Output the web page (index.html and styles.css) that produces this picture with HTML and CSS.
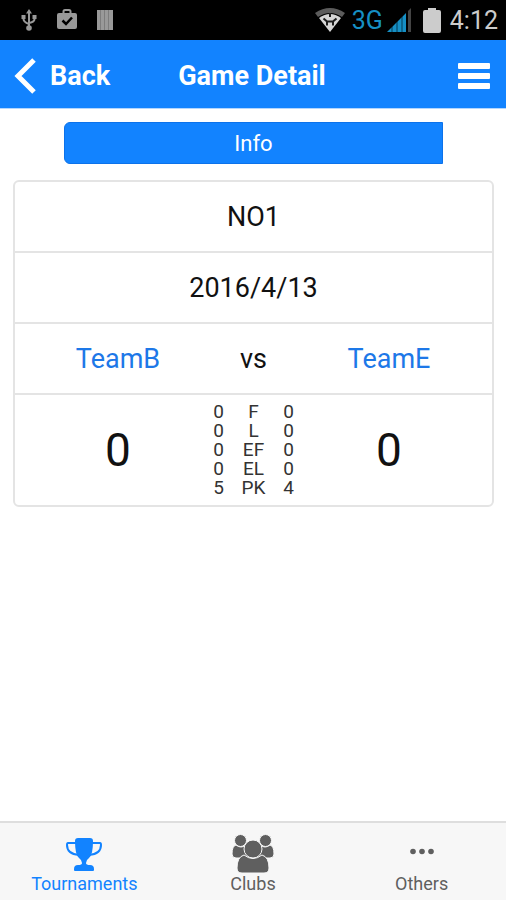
FILE: index.html
```html
<!DOCTYPE html>
<html lang="en">
<head>
<meta charset="utf-8">
<meta name="viewport" content="width=device-width, initial-scale=1">
<title>Game Detail</title>
<link rel="stylesheet" href="styles.css">
</head>
<body>
<div class="status">
  <div class="status-group status-left">
    <svg width="16" height="22" viewBox="0 0 16 22" fill="none" stroke="#999" stroke-width="2"><path d="M8 3v16M2.500 8v2q0 3 5.500 5M13.500 8v2q0 3-5.500 4"/><path d="M8 0l3 4.500H5zM.5 6h4v4h-4zM11.500 6h4v4h-4z" fill="#999" stroke="none"/><circle cx="8" cy="19" r="2.800" fill="#999" stroke="none"/></svg>
    <svg width="22" height="22" viewBox="0 0 22 22"><path d="M7.500 4V2.500Q7.500 1 9 1h4q1.500 0 1.500 1.500V4" fill="none" stroke="#999" stroke-width="2"/><rect x="1" y="4" width="20" height="16" rx="2" fill="#999"/><path d="M6.500 11.500l3.500 3.500 6-6.500" fill="none" stroke="#000" stroke-width="2.500"/></svg>
    <svg width="16" height="22" viewBox="0 0 16 22"><path d="M0 1h16v20H0z" fill="#999"/><path d="M3.500 1v20M7.500 1v20M11.500 1v20" stroke="#7c7c7c"/></svg>
  </div>
  <div class="status-group status-right">
    <svg width="30" height="24" viewBox="0 0 30 24"><path d="M0 5Q15-5 30 5l-3 4Q15 1 3 9z" fill="#5c5c5c"/><path d="M4 10Q15 2 26 10L15 24z" fill="#d6d6d6"/><path d="M8.500 10.500l3.500 3v4M21.500 10.500l-3.500 3v4M12 13.500h6M15 5v4" fill="none" stroke="#1c1c1c" stroke-width="2"/></svg>
    <span class="network">3G</span>
    <svg class="signal" width="25" height="24" viewBox="0 0 25 24"><path d="M21 3l3-3v24h-3z" fill="#444"/><path d="M0 24l4-4v4zM6 18l3-3v9H6zM11 13l3-3v14h-3zM16 8l3-3v19h-3z" fill="#168fc4"/><path d="M4 20l2-2v6H4zM9 15l2-2v11H9zM14 10l2-2v16h-2z" fill="#0c648c"/></svg>
    <svg class="battery" width="18" height="25" viewBox="0 0 18 25"><path d="M5 0h8v2h3q2 0 2 2v19q0 2-2 2H2q-2 0-2-2V4q0-2 2-2h3z" fill="#ccc"/></svg>
    <time class="clock">4:12</time>
  </div>
</div>
<header class="navbar">
  <button class="back" type="button">
    <svg width="22" height="36" viewBox="0 0 22 36" fill="none" stroke="#fff" stroke-width="5"><path d="M20 2L4 18l16 16"/></svg>
    <span>Back</span>
  </button>
  <h1 class="title">Game Detail</h1>
  <button class="menu" type="button" aria-label="Menu">
    <svg width="32" height="28" viewBox="0 0 32 28" fill="#fff"><rect y="1" width="32" height="6" rx="1"/><rect y="11" width="32" height="6" rx="1"/><rect y="21" width="32" height="6" rx="1"/></svg>
  </button>
</header>
<main class="content">
  <button class="segment" type="button">Info</button>
  <section class="card">
    <div class="row">NO1</div>
    <div class="row">2016/4/13</div>
    <div class="row match">
      <a class="team" href="#team-b">TeamB</a>
      <span>vs</span>
      <a class="team" href="#team-e">TeamE</a>
    </div>
    <div class="match scores">
      <strong class="score">0</strong>
      <table class="periods">
        <tbody>
          <tr><td>0</td><th scope="row">F</th><td>0</td></tr>
          <tr><td>0</td><th scope="row">L</th><td>0</td></tr>
          <tr><td>0</td><th scope="row">EF</th><td>0</td></tr>
          <tr><td>0</td><th scope="row">EL</th><td>0</td></tr>
          <tr><td>5</td><th scope="row">PK</th><td>4</td></tr>
        </tbody>
      </table>
      <strong class="score">0</strong>
    </div>
  </section>
</main>
<nav class="tabs">
  <a class="tab active" href="#tournaments">
    <svg width="36" height="40" viewBox="0 0 36 40"><path d="M10 9H2q-1 0-1 2 0 9 12 10M26 9h8q1 0 1 2 0 9-12 10" fill="none" stroke="currentColor" stroke-width="2"/><path d="M9 7q0-3 3-3h12q3 0 3 3 0 14-4 17-3 2-3 5 0 2 4 2 4 0 4 4v1q0 1-1 1H9q-1 0-1-1v-1q0-4 4-4t4-2q0-3-3-5Q9 21 9 7z" fill="currentColor"/></svg>
    <span>Tournaments</span>
  </a>
  <a class="tab" href="#clubs">
    <svg width="42" height="40" viewBox="0 0 42 40" fill="currentColor" stroke="#f7f7f7" stroke-width="1"><path d="M4 11q5 4 10 0l5 3v10H4q-4 0-4-4 0-8 4-9zM38 11q-5 4-10 0l-5 3v10h15q4 0 4-4 0-8-4-9z"/><circle cx="8.500" cy="6.500" r="6"/><circle cx="33.500" cy="6.500" r="6"/><path d="M12 21q9 7 18 0 7 2 7 13 0 5-5 5H10q-5 0-5-5 0-11 7-13z"/><circle cx="21" cy="15" r="9"/></svg>
    <span>Clubs</span>
  </a>
  <a class="tab" href="#others">
    <svg width="24" height="40" viewBox="0 0 24 40" fill="currentColor"><circle cx="3" cy="17.500" r="2.800"/><circle cx="12" cy="17.500" r="2.800"/><circle cx="21" cy="17.500" r="2.800"/></svg>
    <span>Others</span>
  </a>
</nav>
</body>
</html>
```
FILE: styles.css
```css
* {
  box-sizing: border-box;
}

body {
  margin: 0;
  min-height: 100vh;
  display: flex;
  flex-direction: column;
  background: #fff;
  color: #111;
  font-family: Roboto, "Liberation Sans", sans-serif;
}

button {
  font: inherit;
  color: inherit;
  border: 0;
  padding: 0;
  background: none;
}

a {
  color: inherit;
  text-decoration: none;
}

svg {
  display: block;
}

.status {
  display: flex;
  justify-content: space-between;
  align-items: center;
  height: 40px;
  padding: 0 8px 0 21px;
  background: #000;
}

.status-group {
  display: flex;
  align-items: center;
}

.status-left {
  gap: 19px;
}

.network {
  margin-left: 7px;
  color: #168fc4;
  font-size: 25px;
}

.signal {
  margin-left: 4px;
}

.battery {
  margin: 0 9px 0 11px;
}

.clock {
  padding-top: 2px;
  color: #ccc;
  font-size: 25px;
  line-height: 40px;
}

.navbar {
  display: grid;
  grid-template-columns: 1fr auto 1fr;
  align-items: center;
  height: 69px;
  padding: 3px 16px 0 14px;
  background: #1283ff;
  border-bottom: 1px solid #b2d6ff;
  color: #fff;
  font-size: 27px;
  font-weight: 700;
}

.back {
  display: flex;
  align-items: center;
  gap: 14px;
}

.title {
  margin: 0;
  font-size: inherit;
}

.menu {
  justify-self: end;
}

.content {
  flex: 1;
  padding: 13px 12px 16px 13px;
}

.segment {
  display: block;
  width: 79%;
  height: 42px;
  margin: 0 auto 16px;
  border: 1px solid #0c72ea;
  border-radius: 6px 0 0 6px;
  background: #1283ff;
  color: #fff;
  font-size: 22px;
}

.card {
  border: 2px solid #e4e4e4;
  border-radius: 6px;
  font-size: 27px;
  text-align: center;
}

.row {
  padding-top: 1px;
  border-bottom: 2px solid #e4e4e4;
  line-height: 68px;
}

.match {
  display: grid;
  grid-template-columns: 1fr 105px 1fr;
  align-items: center;
  padding-left: 20px;
  padding-right: 20px;
}

.team {
  color: #1d78e8;
}

.scores {
  padding-top: 7px;
  padding-bottom: 8px;
}

.score {
  font-size: 46px;
  font-weight: 400;
}

.periods {
  width: 100%;
  table-layout: fixed;
  border-collapse: collapse;
  font-size: 19px;
  line-height: 19px;
}

.periods th,
.periods td {
  padding: 0;
  font-weight: 400;
  color: #333;
}

.tabs {
  display: grid;
  grid-template-columns: repeat(3, 1fr);
  height: 79px;
  border-top: 2px solid #dedede;
  background: #f7f7f7;
  color: #5f5f5f;
  font-size: 18px;
  line-height: 20px;
}

.tab {
  display: flex;
  flex-direction: column;
  align-items: center;
  padding-top: 11px;
}

.active {
  color: #1283ff;
}
```
